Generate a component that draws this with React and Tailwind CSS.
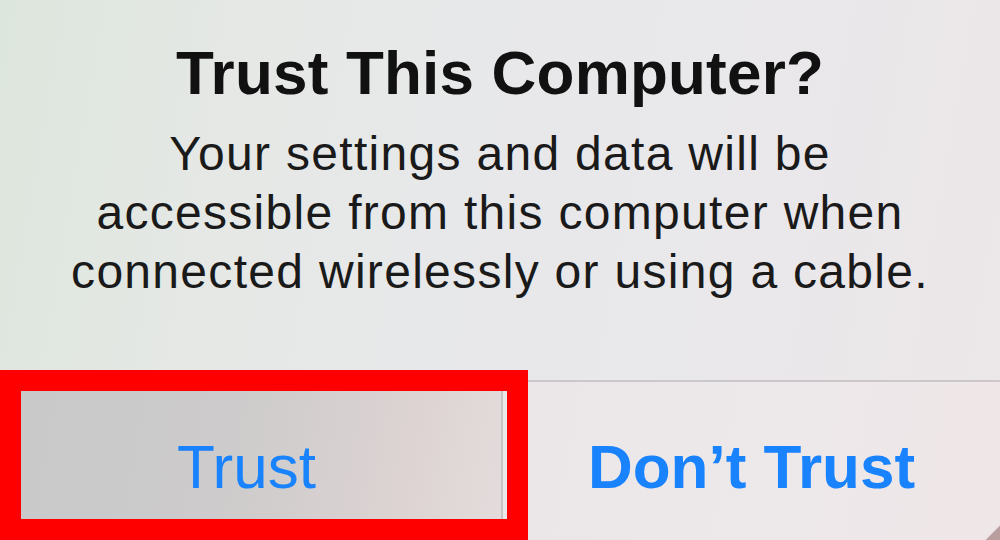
import React from 'react';

// iOS "Trust This Computer?" alert, zoomed in, with a red highlight around Trust
const App = () => {
  return (
    <div
      className="relative w-[1000px] h-[540px] overflow-hidden bg-[linear-gradient(100deg,#dde6dd_0%,#e6e8e6_25%,#e8e8eb_55%,#ece7e9_100%)]"
      style={{ fontFamily: '"Liberation Sans", Arial, sans-serif' }}
    >
      {/* Message */}
      <div className="flex flex-col items-center h-[380px] pt-[38px]">
        <h1 className="text-[62px] leading-[70px] font-bold text-[#111] tracking-[0.2px]">
          Trust This Computer?
        </h1>
        <p className="mt-[16px] text-center text-[48px] leading-[59px] text-[#1a1a1a] tracking-[1.3px]">
          Your settings and data will be
          <br />
          accessible from this computer when
          <br />
          connected wirelessly or using a cable.
        </p>
      </div>

      {/* Actions */}
      <div className="flex h-[160px] border-t-2 border-[#cbc7ca]">
        <button className="w-[503px] h-full flex justify-center items-start pt-[50px] border-r-2 border-[#c9c4c4] bg-[linear-gradient(100deg,#c9c9c9_0%,#cdcbcb_45%,#ddd3d3_80%,#e4dcdc_100%)]">
          <span className="text-[62px] leading-[70px] text-[#1883fd] -ml-[8px]">Trust</span>
        </button>
        <button className="flex-1 h-full flex justify-center items-start pt-[50px] bg-[linear-gradient(100deg,#ebe6e8_0%,#ede8ea_60%,#efe6e7_100%)]">
          <span className="text-[62px] leading-[70px] font-bold text-[#1883fd]">Don’t Trust</span>
        </button>
      </div>

      {/* highlight annotation */}
      <div className="absolute left-0 top-[370px] w-[528px] h-[170px] border-[21px] border-[#ff0000] pointer-events-none" />

      {/* corner of the sheet behind */}
      <div className="absolute right-0 bottom-0 w-[18px] h-[16px] bg-[linear-gradient(135deg,transparent_55%,#b89e9e_60%)]" />
    </div>
  );
};

export default App;
